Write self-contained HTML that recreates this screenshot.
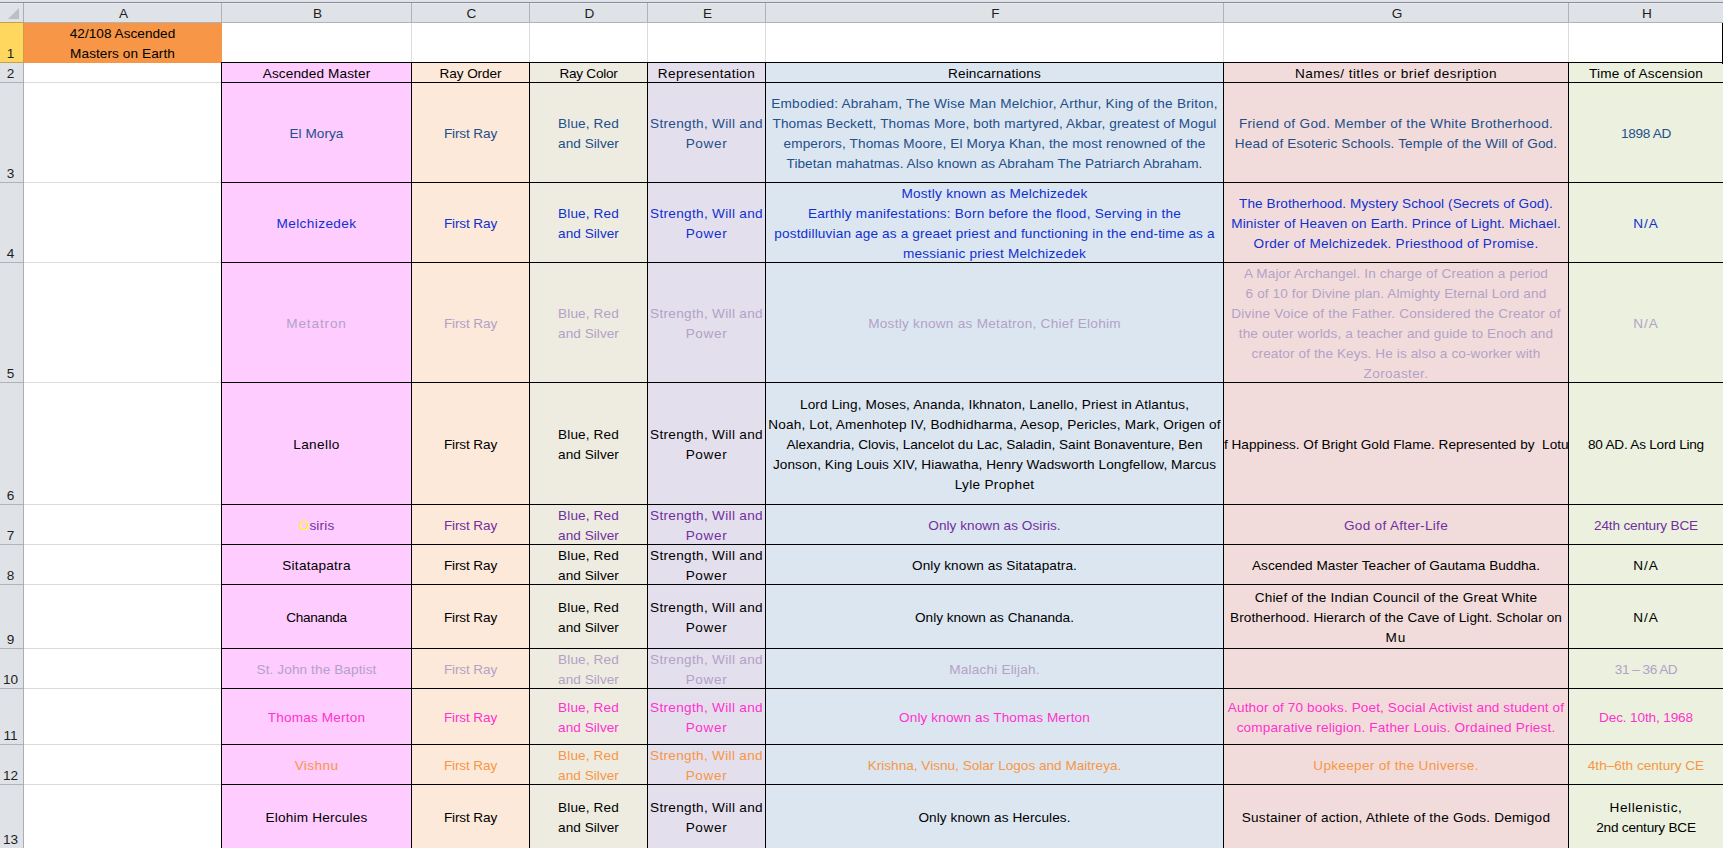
<!DOCTYPE html><html><head><meta charset="utf-8"><style>
*{margin:0;padding:0}
html,body{width:1723px;height:848px;overflow:hidden;background:#fff}
body{position:relative;font-family:"Liberation Sans",sans-serif;font-size:13.6px}
body>div{position:absolute}
.cl{position:absolute;overflow:hidden}
.t{position:absolute;left:0;width:100%;text-align:center;line-height:20px;white-space:nowrap;}
.ch{position:absolute;top:4px;height:19px;line-height:19px;text-align:center;color:#1E1E1E;font-size:13.6px}
.rn{position:absolute;left:-1px;width:23px;height:20px;line-height:20px;text-align:center;color:#1E1E1E;font-size:13.6px}
</style></head><body>
<div style="left:0px;top:0px;width:1723px;height:2px;background:#DEE2EE;"></div>
<div style="left:0px;top:2px;width:1723px;height:1px;background:#8D8D8D;"></div>
<div style="left:0px;top:3px;width:1723px;height:19px;background:#DFE3E8;"></div>
<div style="left:0px;top:3px;width:1723px;height:1px;background:#E8EAEE;"></div>
<div style="left:0px;top:22px;width:1723px;height:1px;background:#AEB3BA;"></div>
<div style="left:0px;top:23px;width:23px;height:825px;background:#DFE3E8;"></div>
<div style="left:23px;top:3px;width:1px;height:845px;background:#A9AEB6;"></div>
<div style="left:221px;top:3px;width:1px;height:20px;background:#AEB3BA;"></div>
<div style="left:411px;top:3px;width:1px;height:20px;background:#AEB3BA;"></div>
<div style="left:529px;top:3px;width:1px;height:20px;background:#AEB3BA;"></div>
<div style="left:647px;top:3px;width:1px;height:20px;background:#AEB3BA;"></div>
<div style="left:765px;top:3px;width:1px;height:20px;background:#AEB3BA;"></div>
<div style="left:1223px;top:3px;width:1px;height:20px;background:#AEB3BA;"></div>
<div style="left:1568px;top:3px;width:1px;height:20px;background:#AEB3BA;"></div>
<svg style="position:absolute;left:0;top:0" width="23" height="22"><polygon points="19,8 19,19 8,19" fill="#BBBFC4"/></svg>
<div class="ch" style="left:25px;width:197px">A</div>
<div class="ch" style="left:223px;width:189px">B</div>
<div class="ch" style="left:413px;width:117px">C</div>
<div class="ch" style="left:531px;width:117px">D</div>
<div class="ch" style="left:649px;width:117px">E</div>
<div class="ch" style="left:767px;width:457px">F</div>
<div class="ch" style="left:1225px;width:344px">G</div>
<div class="ch" style="left:1570px;width:154px">H</div>
<div style="left:0px;top:22px;width:24px;height:41px;background:#C9A04A;"></div>
<div style="left:0px;top:23px;width:23px;height:39px;background:#FFD75E;"></div>
<div class="rn" style="top:44px">1</div>
<div style="left:0px;top:82px;width:23px;height:1px;background:#AEB3BA;"></div>
<div class="rn" style="top:64px">2</div>
<div style="left:0px;top:182px;width:23px;height:1px;background:#AEB3BA;"></div>
<div class="rn" style="top:164px">3</div>
<div style="left:0px;top:262px;width:23px;height:1px;background:#AEB3BA;"></div>
<div class="rn" style="top:244px">4</div>
<div style="left:0px;top:382px;width:23px;height:1px;background:#AEB3BA;"></div>
<div class="rn" style="top:364px">5</div>
<div style="left:0px;top:504px;width:23px;height:1px;background:#AEB3BA;"></div>
<div class="rn" style="top:486px">6</div>
<div style="left:0px;top:544px;width:23px;height:1px;background:#AEB3BA;"></div>
<div class="rn" style="top:526px">7</div>
<div style="left:0px;top:584px;width:23px;height:1px;background:#AEB3BA;"></div>
<div class="rn" style="top:566px">8</div>
<div style="left:0px;top:648px;width:23px;height:1px;background:#AEB3BA;"></div>
<div class="rn" style="top:630px">9</div>
<div style="left:0px;top:688px;width:23px;height:1px;background:#AEB3BA;"></div>
<div class="rn" style="top:670px">10</div>
<div style="left:0px;top:744px;width:23px;height:1px;background:#AEB3BA;"></div>
<div class="rn" style="top:726px">11</div>
<div style="left:0px;top:784px;width:23px;height:1px;background:#AEB3BA;"></div>
<div class="rn" style="top:766px">12</div>
<div style="left:0px;top:848px;width:23px;height:1px;background:#AEB3BA;"></div>
<div class="rn" style="top:830px">13</div>
<div style="left:24px;top:62px;width:1699px;height:1px;background:#DADCDD;"></div>
<div style="left:24px;top:82px;width:1699px;height:1px;background:#DADCDD;"></div>
<div style="left:24px;top:182px;width:1699px;height:1px;background:#DADCDD;"></div>
<div style="left:24px;top:262px;width:1699px;height:1px;background:#DADCDD;"></div>
<div style="left:24px;top:382px;width:1699px;height:1px;background:#DADCDD;"></div>
<div style="left:24px;top:504px;width:1699px;height:1px;background:#DADCDD;"></div>
<div style="left:24px;top:544px;width:1699px;height:1px;background:#DADCDD;"></div>
<div style="left:24px;top:584px;width:1699px;height:1px;background:#DADCDD;"></div>
<div style="left:24px;top:648px;width:1699px;height:1px;background:#DADCDD;"></div>
<div style="left:24px;top:688px;width:1699px;height:1px;background:#DADCDD;"></div>
<div style="left:24px;top:744px;width:1699px;height:1px;background:#DADCDD;"></div>
<div style="left:24px;top:784px;width:1699px;height:1px;background:#DADCDD;"></div>
<div style="left:24px;top:848px;width:1699px;height:1px;background:#DADCDD;"></div>
<div style="left:221px;top:23px;width:1px;height:825px;background:#DADCDD;"></div>
<div style="left:411px;top:23px;width:1px;height:825px;background:#DADCDD;"></div>
<div style="left:529px;top:23px;width:1px;height:825px;background:#DADCDD;"></div>
<div style="left:647px;top:23px;width:1px;height:825px;background:#DADCDD;"></div>
<div style="left:765px;top:23px;width:1px;height:825px;background:#DADCDD;"></div>
<div style="left:1223px;top:23px;width:1px;height:825px;background:#DADCDD;"></div>
<div style="left:1568px;top:23px;width:1px;height:825px;background:#DADCDD;"></div>
<div style="left:24px;top:23px;width:198px;height:40px;background:#F79646;"></div>
<div style="left:221px;top:62px;width:191px;height:21px;background:#FFCCFF;"></div>
<div style="left:411px;top:62px;width:119px;height:21px;background:#FDE9D9;"></div>
<div style="left:529px;top:62px;width:119px;height:21px;background:#EEECE1;"></div>
<div style="left:647px;top:62px;width:119px;height:21px;background:#E4DFEC;"></div>
<div style="left:765px;top:62px;width:459px;height:21px;background:#DCE6F1;"></div>
<div style="left:1223px;top:62px;width:346px;height:21px;background:#F2DCDB;"></div>
<div style="left:1568px;top:62px;width:156px;height:21px;background:#EBF1DE;"></div>
<div style="left:221px;top:82px;width:191px;height:101px;background:#FFCCFF;"></div>
<div style="left:411px;top:82px;width:119px;height:101px;background:#FDE9D9;"></div>
<div style="left:529px;top:82px;width:119px;height:101px;background:#EEECE1;"></div>
<div style="left:647px;top:82px;width:119px;height:101px;background:#E4DFEC;"></div>
<div style="left:765px;top:82px;width:459px;height:101px;background:#DCE6F1;"></div>
<div style="left:1223px;top:82px;width:346px;height:101px;background:#F2DCDB;"></div>
<div style="left:1568px;top:82px;width:156px;height:101px;background:#EBF1DE;"></div>
<div style="left:221px;top:182px;width:191px;height:81px;background:#FFCCFF;"></div>
<div style="left:411px;top:182px;width:119px;height:81px;background:#FDE9D9;"></div>
<div style="left:529px;top:182px;width:119px;height:81px;background:#EEECE1;"></div>
<div style="left:647px;top:182px;width:119px;height:81px;background:#E4DFEC;"></div>
<div style="left:765px;top:182px;width:459px;height:81px;background:#DCE6F1;"></div>
<div style="left:1223px;top:182px;width:346px;height:81px;background:#F2DCDB;"></div>
<div style="left:1568px;top:182px;width:156px;height:81px;background:#EBF1DE;"></div>
<div style="left:221px;top:262px;width:191px;height:121px;background:#FFCCFF;"></div>
<div style="left:411px;top:262px;width:119px;height:121px;background:#FDE9D9;"></div>
<div style="left:529px;top:262px;width:119px;height:121px;background:#EEECE1;"></div>
<div style="left:647px;top:262px;width:119px;height:121px;background:#E4DFEC;"></div>
<div style="left:765px;top:262px;width:459px;height:121px;background:#DCE6F1;"></div>
<div style="left:1223px;top:262px;width:346px;height:121px;background:#F2DCDB;"></div>
<div style="left:1568px;top:262px;width:156px;height:121px;background:#EBF1DE;"></div>
<div style="left:221px;top:382px;width:191px;height:123px;background:#FFCCFF;"></div>
<div style="left:411px;top:382px;width:119px;height:123px;background:#FDE9D9;"></div>
<div style="left:529px;top:382px;width:119px;height:123px;background:#EEECE1;"></div>
<div style="left:647px;top:382px;width:119px;height:123px;background:#E4DFEC;"></div>
<div style="left:765px;top:382px;width:459px;height:123px;background:#DCE6F1;"></div>
<div style="left:1223px;top:382px;width:346px;height:123px;background:#F2DCDB;"></div>
<div style="left:1568px;top:382px;width:156px;height:123px;background:#EBF1DE;"></div>
<div style="left:221px;top:504px;width:191px;height:41px;background:#FFCCFF;"></div>
<div style="left:411px;top:504px;width:119px;height:41px;background:#FDE9D9;"></div>
<div style="left:529px;top:504px;width:119px;height:41px;background:#EEECE1;"></div>
<div style="left:647px;top:504px;width:119px;height:41px;background:#E4DFEC;"></div>
<div style="left:765px;top:504px;width:459px;height:41px;background:#DCE6F1;"></div>
<div style="left:1223px;top:504px;width:346px;height:41px;background:#F2DCDB;"></div>
<div style="left:1568px;top:504px;width:156px;height:41px;background:#EBF1DE;"></div>
<div style="left:221px;top:544px;width:191px;height:41px;background:#FFCCFF;"></div>
<div style="left:411px;top:544px;width:119px;height:41px;background:#FDE9D9;"></div>
<div style="left:529px;top:544px;width:119px;height:41px;background:#EEECE1;"></div>
<div style="left:647px;top:544px;width:119px;height:41px;background:#E4DFEC;"></div>
<div style="left:765px;top:544px;width:459px;height:41px;background:#DCE6F1;"></div>
<div style="left:1223px;top:544px;width:346px;height:41px;background:#F2DCDB;"></div>
<div style="left:1568px;top:544px;width:156px;height:41px;background:#EBF1DE;"></div>
<div style="left:221px;top:584px;width:191px;height:65px;background:#FFCCFF;"></div>
<div style="left:411px;top:584px;width:119px;height:65px;background:#FDE9D9;"></div>
<div style="left:529px;top:584px;width:119px;height:65px;background:#EEECE1;"></div>
<div style="left:647px;top:584px;width:119px;height:65px;background:#E4DFEC;"></div>
<div style="left:765px;top:584px;width:459px;height:65px;background:#DCE6F1;"></div>
<div style="left:1223px;top:584px;width:346px;height:65px;background:#F2DCDB;"></div>
<div style="left:1568px;top:584px;width:156px;height:65px;background:#EBF1DE;"></div>
<div style="left:221px;top:648px;width:191px;height:41px;background:#FFCCFF;"></div>
<div style="left:411px;top:648px;width:119px;height:41px;background:#FDE9D9;"></div>
<div style="left:529px;top:648px;width:119px;height:41px;background:#EEECE1;"></div>
<div style="left:647px;top:648px;width:119px;height:41px;background:#E4DFEC;"></div>
<div style="left:765px;top:648px;width:459px;height:41px;background:#DCE6F1;"></div>
<div style="left:1223px;top:648px;width:346px;height:41px;background:#F2DCDB;"></div>
<div style="left:1568px;top:648px;width:156px;height:41px;background:#EBF1DE;"></div>
<div style="left:221px;top:688px;width:191px;height:57px;background:#FFCCFF;"></div>
<div style="left:411px;top:688px;width:119px;height:57px;background:#FDE9D9;"></div>
<div style="left:529px;top:688px;width:119px;height:57px;background:#EEECE1;"></div>
<div style="left:647px;top:688px;width:119px;height:57px;background:#E4DFEC;"></div>
<div style="left:765px;top:688px;width:459px;height:57px;background:#DCE6F1;"></div>
<div style="left:1223px;top:688px;width:346px;height:57px;background:#F2DCDB;"></div>
<div style="left:1568px;top:688px;width:156px;height:57px;background:#EBF1DE;"></div>
<div style="left:221px;top:744px;width:191px;height:41px;background:#FFCCFF;"></div>
<div style="left:411px;top:744px;width:119px;height:41px;background:#FDE9D9;"></div>
<div style="left:529px;top:744px;width:119px;height:41px;background:#EEECE1;"></div>
<div style="left:647px;top:744px;width:119px;height:41px;background:#E4DFEC;"></div>
<div style="left:765px;top:744px;width:459px;height:41px;background:#DCE6F1;"></div>
<div style="left:1223px;top:744px;width:346px;height:41px;background:#F2DCDB;"></div>
<div style="left:1568px;top:744px;width:156px;height:41px;background:#EBF1DE;"></div>
<div style="left:221px;top:784px;width:191px;height:65px;background:#FFCCFF;"></div>
<div style="left:411px;top:784px;width:119px;height:65px;background:#FDE9D9;"></div>
<div style="left:529px;top:784px;width:119px;height:65px;background:#EEECE1;"></div>
<div style="left:647px;top:784px;width:119px;height:65px;background:#E4DFEC;"></div>
<div style="left:765px;top:784px;width:459px;height:65px;background:#DCE6F1;"></div>
<div style="left:1223px;top:784px;width:346px;height:65px;background:#F2DCDB;"></div>
<div style="left:1568px;top:784px;width:156px;height:65px;background:#EBF1DE;"></div>
<div style="left:221px;top:62px;width:1502px;height:1px;background:#000;"></div>
<div style="left:221px;top:82px;width:1502px;height:1px;background:#000;"></div>
<div style="left:221px;top:182px;width:1502px;height:1px;background:#000;"></div>
<div style="left:221px;top:262px;width:1502px;height:1px;background:#000;"></div>
<div style="left:221px;top:382px;width:1502px;height:1px;background:#000;"></div>
<div style="left:221px;top:504px;width:1502px;height:1px;background:#000;"></div>
<div style="left:221px;top:544px;width:1502px;height:1px;background:#000;"></div>
<div style="left:221px;top:584px;width:1502px;height:1px;background:#000;"></div>
<div style="left:221px;top:648px;width:1502px;height:1px;background:#000;"></div>
<div style="left:221px;top:688px;width:1502px;height:1px;background:#000;"></div>
<div style="left:221px;top:744px;width:1502px;height:1px;background:#000;"></div>
<div style="left:221px;top:784px;width:1502px;height:1px;background:#000;"></div>
<div style="left:221px;top:848px;width:1502px;height:1px;background:#000;"></div>
<div style="left:221px;top:62px;width:1px;height:786px;background:#000;"></div>
<div style="left:411px;top:62px;width:1px;height:786px;background:#000;"></div>
<div style="left:529px;top:62px;width:1px;height:786px;background:#000;"></div>
<div style="left:647px;top:62px;width:1px;height:786px;background:#000;"></div>
<div style="left:765px;top:62px;width:1px;height:786px;background:#000;"></div>
<div style="left:1223px;top:62px;width:1px;height:786px;background:#000;"></div>
<div style="left:1568px;top:62px;width:1px;height:786px;background:#000;"></div>
<div style="left:1722px;top:23px;width:1px;height:41px;background:#000;"></div>
<div class="cl" style="left:24px;top:23px;width:197px;height:39px"><div class="t" style="top:1.29px;color:#000"><span style="letter-spacing:0.036px">42/108 Ascended</span><br><span style="letter-spacing:0.080px">Masters on Earth</span></div></div>
<div class="cl" style="left:222px;top:63px;width:189px;height:19px"><div class="t" style="top:1.29px;color:#000000"><span style="letter-spacing:0.121px">Ascended Master</span></div></div>
<div class="cl" style="left:412px;top:63px;width:117px;height:19px"><div class="t" style="top:1.29px;color:#000000"><span style="letter-spacing:-0.100px">Ray Order</span></div></div>
<div class="cl" style="left:530px;top:63px;width:117px;height:19px"><div class="t" style="top:1.29px;color:#000000"><span style="letter-spacing:-0.263px">Ray Color</span></div></div>
<div class="cl" style="left:648px;top:63px;width:117px;height:19px"><div class="t" style="top:1.29px;color:#000000"><span style="letter-spacing:0.377px">Representation</span></div></div>
<div class="cl" style="left:766px;top:63px;width:457px;height:19px"><div class="t" style="top:1.29px;color:#000000"><span style="letter-spacing:0.169px">Reincarnations</span></div></div>
<div class="cl" style="left:1224px;top:63px;width:344px;height:19px"><div class="t" style="top:1.29px;color:#000000"><span style="letter-spacing:0.450px">Names/ titles or brief desription</span></div></div>
<div class="cl" style="left:1569px;top:63px;width:154px;height:19px"><div class="t" style="top:1.29px;color:#000000"><span style="letter-spacing:0.206px">Time of Ascension</span></div></div>
<div class="cl" style="left:222px;top:83px;width:189px;height:99px"><div class="t" style="top:41.29px;color:#234F8A"><span style="letter-spacing:0.043px">El Morya</span></div></div>
<div class="cl" style="left:412px;top:83px;width:117px;height:99px"><div class="t" style="top:41.29px;color:#234F8A"><span style="letter-spacing:-0.138px">First Ray</span></div></div>
<div class="cl" style="left:530px;top:83px;width:117px;height:99px"><div class="t" style="top:31.29px;color:#234F8A"><span style="letter-spacing:0.125px">Blue, Red</span><br><span style="letter-spacing:0.044px">and Silver</span></div></div>
<div class="cl" style="left:648px;top:83px;width:117px;height:99px"><div class="t" style="top:31.29px;color:#234F8A"><span style="letter-spacing:0.312px">Strength, Will and</span><br><span style="letter-spacing:0.625px">Power</span></div></div>
<div class="cl" style="left:766px;top:83px;width:457px;height:99px"><div class="t" style="top:11.29px;color:#234F8A"><span style="letter-spacing:0.221px">Embodied: Abraham, The Wise Man Melchior, Arthur, King of the Briton,</span><br><span style="letter-spacing:0.134px">Thomas Beckett, Thomas More, both martyred, Akbar, greatest of Mogul</span><br><span style="letter-spacing:0.129px">emperors, Thomas Moore, El Morya Khan, the most renowned of the</span><br><span style="letter-spacing:0.066px">Tibetan mahatmas. Also known as Abraham The Patriarch Abraham.</span></div></div>
<div class="cl" style="left:1224px;top:83px;width:344px;height:99px"><div class="t" style="top:31.29px;color:#234F8A"><span style="letter-spacing:0.320px">Friend of God. Member of the White Brotherhood.</span><br><span style="letter-spacing:0.131px">Head of Esoteric Schools. Temple of the Will of God.</span></div></div>
<div class="cl" style="left:1569px;top:83px;width:154px;height:99px"><div class="t" style="top:41.29px;color:#234F8A"><span style="letter-spacing:-0.317px">1898 AD</span></div></div>
<div class="cl" style="left:222px;top:183px;width:189px;height:79px"><div class="t" style="top:31.29px;color:#1030D0"><span style="letter-spacing:0.410px">Melchizedek</span></div></div>
<div class="cl" style="left:412px;top:183px;width:117px;height:79px"><div class="t" style="top:31.29px;color:#1030D0"><span style="letter-spacing:-0.138px">First Ray</span></div></div>
<div class="cl" style="left:530px;top:183px;width:117px;height:79px"><div class="t" style="top:21.29px;color:#1030D0"><span style="letter-spacing:0.125px">Blue, Red</span><br><span style="letter-spacing:0.044px">and Silver</span></div></div>
<div class="cl" style="left:648px;top:183px;width:117px;height:79px"><div class="t" style="top:21.29px;color:#1030D0"><span style="letter-spacing:0.312px">Strength, Will and</span><br><span style="letter-spacing:0.625px">Power</span></div></div>
<div class="cl" style="left:766px;top:183px;width:457px;height:79px"><div class="t" style="top:1.29px;color:#1030D0"><span style="letter-spacing:0.231px">Mostly known as Melchizedek</span><br><span style="letter-spacing:0.233px">Earthly manifestations: Born before the flood, Serving in the</span><br><span style="letter-spacing:0.153px">postdilluvian age as a greaet priest and functioning in the end-time as a</span><br><span style="letter-spacing:0.222px">messianic priest Melchizedek</span></div></div>
<div class="cl" style="left:1224px;top:183px;width:344px;height:79px"><div class="t" style="top:11.29px;color:#1030D0"><span style="letter-spacing:0.085px">The Brotherhood. Mystery School (Secrets of God).</span><br><span style="letter-spacing:0.158px">Minister of Heaven on Earth. Prince of Light. Michael.</span><br><span style="letter-spacing:0.240px">Order of Melchizedek. Priesthood of Promise.</span></div></div>
<div class="cl" style="left:1569px;top:183px;width:154px;height:79px"><div class="t" style="top:31.29px;color:#1030D0"><span style="letter-spacing:1.000px">N/A</span></div></div>
<div class="cl" style="left:222px;top:263px;width:189px;height:119px"><div class="t" style="top:51.29px;color:#B3A2C7"><span style="letter-spacing:0.857px">Metatron</span></div></div>
<div class="cl" style="left:412px;top:263px;width:117px;height:119px"><div class="t" style="top:51.29px;color:#B3A2C7"><span style="letter-spacing:-0.138px">First Ray</span></div></div>
<div class="cl" style="left:530px;top:263px;width:117px;height:119px"><div class="t" style="top:41.29px;color:#B3A2C7"><span style="letter-spacing:0.125px">Blue, Red</span><br><span style="letter-spacing:0.044px">and Silver</span></div></div>
<div class="cl" style="left:648px;top:263px;width:117px;height:119px"><div class="t" style="top:41.29px;color:#B3A2C7"><span style="letter-spacing:0.312px">Strength, Will and</span><br><span style="letter-spacing:0.625px">Power</span></div></div>
<div class="cl" style="left:766px;top:263px;width:457px;height:119px"><div class="t" style="top:51.29px;color:#B3A2C7"><span style="letter-spacing:0.268px">Mostly known as Metatron, Chief Elohim</span></div></div>
<div class="cl" style="left:1224px;top:263px;width:344px;height:119px"><div class="t" style="top:1.29px;color:#B3A2C7"><span style="letter-spacing:0.129px">A Major Archangel. In charge of Creation a period</span><br><span style="letter-spacing:0.106px">6 of 10 for Divine plan. Almighty Eternal Lord and</span><br><span style="letter-spacing:0.198px">Divine Voice of the Father. Considered the Creator of</span><br><span style="letter-spacing:0.122px">the outer worlds, a teacher and guide to Enoch and</span><br><span style="letter-spacing:0.098px">creator of the Keys. He is also a co-worker with</span><br><span style="letter-spacing:0.356px">Zoroaster.</span></div></div>
<div class="cl" style="left:1569px;top:263px;width:154px;height:119px"><div class="t" style="top:51.29px;color:#B3A2C7"><span style="letter-spacing:1.000px">N/A</span></div></div>
<div class="cl" style="left:222px;top:383px;width:189px;height:121px"><div class="t" style="top:52.29px;color:#000000"><span style="letter-spacing:0.383px">Lanello</span></div></div>
<div class="cl" style="left:412px;top:383px;width:117px;height:121px"><div class="t" style="top:52.29px;color:#000000"><span style="letter-spacing:-0.138px">First Ray</span></div></div>
<div class="cl" style="left:530px;top:383px;width:117px;height:121px"><div class="t" style="top:42.29px;color:#000000"><span style="letter-spacing:0.125px">Blue, Red</span><br><span style="letter-spacing:0.044px">and Silver</span></div></div>
<div class="cl" style="left:648px;top:383px;width:117px;height:121px"><div class="t" style="top:42.29px;color:#000000"><span style="letter-spacing:0.312px">Strength, Will and</span><br><span style="letter-spacing:0.625px">Power</span></div></div>
<div class="cl" style="left:766px;top:383px;width:457px;height:121px"><div class="t" style="top:12.29px;color:#000000"><span style="letter-spacing:0.116px">Lord Ling, Moses, Ananda, Ikhnaton, Lanello, Priest in Atlantus,</span><br><span style="letter-spacing:0.154px">Noah, Lot, Amenhotep IV, Bodhidharma, Aesop, Pericles, Mark, Origen of</span><br><span style="letter-spacing:-0.006px">Alexandria, Clovis, Lancelot du Lac, Saladin, Saint Bonaventure, Ben</span><br><span style="letter-spacing:0.064px">Jonson, King Louis XIV, Hiawatha, Henry Wadsworth Longfellow, Marcus</span><br><span style="letter-spacing:0.327px">Lyle Prophet</span></div></div>
<div class="cl" style="left:1224px;top:383px;width:344px;height:121px"><div class="t" style="top:52.29px;left:0;width:auto;text-align:left;color:#000000"><span style="letter-spacing:0.000px">f Happiness. Of Bright Gold Flame. Represented by  Lotu</span></div></div>
<div class="cl" style="left:1569px;top:383px;width:154px;height:121px"><div class="t" style="top:52.29px;color:#000000"><span style="letter-spacing:-0.222px">80 AD. As Lord Ling</span></div></div>
<div class="cl" style="left:222px;top:505px;width:189px;height:39px"><div class="t" style="top:11.29px;color:#7030A0"><span style="letter-spacing:0.160px"><span style="color:#FFFF00">O</span>siris</span></div></div>
<div class="cl" style="left:412px;top:505px;width:117px;height:39px"><div class="t" style="top:11.29px;color:#7030A0"><span style="letter-spacing:-0.138px">First Ray</span></div></div>
<div class="cl" style="left:530px;top:505px;width:117px;height:39px"><div class="t" style="top:1.29px;color:#7030A0"><span style="letter-spacing:0.125px">Blue, Red</span><br><span style="letter-spacing:0.044px">and Silver</span></div></div>
<div class="cl" style="left:648px;top:505px;width:117px;height:39px"><div class="t" style="top:1.29px;color:#7030A0"><span style="letter-spacing:0.312px">Strength, Will and</span><br><span style="letter-spacing:0.625px">Power</span></div></div>
<div class="cl" style="left:766px;top:505px;width:457px;height:39px"><div class="t" style="top:11.29px;color:#7030A0"><span style="letter-spacing:0.045px">Only known as Osiris.</span></div></div>
<div class="cl" style="left:1224px;top:505px;width:344px;height:39px"><div class="t" style="top:11.29px;color:#7030A0"><span style="letter-spacing:0.300px">God of After-Life</span></div></div>
<div class="cl" style="left:1569px;top:505px;width:154px;height:39px"><div class="t" style="top:11.29px;color:#7030A0"><span style="letter-spacing:-0.167px">24th century BCE</span></div></div>
<div class="cl" style="left:222px;top:545px;width:189px;height:39px"><div class="t" style="top:11.29px;color:#000000"><span style="letter-spacing:0.240px">Sitatapatra</span></div></div>
<div class="cl" style="left:412px;top:545px;width:117px;height:39px"><div class="t" style="top:11.29px;color:#000000"><span style="letter-spacing:-0.138px">First Ray</span></div></div>
<div class="cl" style="left:530px;top:545px;width:117px;height:39px"><div class="t" style="top:1.29px;color:#000000"><span style="letter-spacing:0.125px">Blue, Red</span><br><span style="letter-spacing:0.044px">and Silver</span></div></div>
<div class="cl" style="left:648px;top:545px;width:117px;height:39px"><div class="t" style="top:1.29px;color:#000000"><span style="letter-spacing:0.312px">Strength, Will and</span><br><span style="letter-spacing:0.625px">Power</span></div></div>
<div class="cl" style="left:766px;top:545px;width:457px;height:39px"><div class="t" style="top:11.29px;color:#000000"><span style="letter-spacing:0.096px">Only known as Sitatapatra.</span></div></div>
<div class="cl" style="left:1224px;top:545px;width:344px;height:39px"><div class="t" style="top:11.29px;color:#000000"><span style="letter-spacing:0.024px">Ascended Master Teacher of Gautama Buddha.</span></div></div>
<div class="cl" style="left:1569px;top:545px;width:154px;height:39px"><div class="t" style="top:11.29px;color:#000000"><span style="letter-spacing:1.000px">N/A</span></div></div>
<div class="cl" style="left:222px;top:585px;width:189px;height:63px"><div class="t" style="top:23.29px;color:#000000"><span style="letter-spacing:-0.271px">Chananda</span></div></div>
<div class="cl" style="left:412px;top:585px;width:117px;height:63px"><div class="t" style="top:23.29px;color:#000000"><span style="letter-spacing:-0.138px">First Ray</span></div></div>
<div class="cl" style="left:530px;top:585px;width:117px;height:63px"><div class="t" style="top:13.29px;color:#000000"><span style="letter-spacing:0.125px">Blue, Red</span><br><span style="letter-spacing:0.044px">and Silver</span></div></div>
<div class="cl" style="left:648px;top:585px;width:117px;height:63px"><div class="t" style="top:13.29px;color:#000000"><span style="letter-spacing:0.312px">Strength, Will and</span><br><span style="letter-spacing:0.625px">Power</span></div></div>
<div class="cl" style="left:766px;top:585px;width:457px;height:63px"><div class="t" style="top:23.29px;color:#000000"><span style="letter-spacing:-0.027px">Only known as Chananda.</span></div></div>
<div class="cl" style="left:1224px;top:585px;width:344px;height:63px"><div class="t" style="top:3.29px;color:#000000"><span style="letter-spacing:0.200px">Chief of the Indian Council of the Great White</span><br><span style="letter-spacing:0.072px">Brotherhood. Hierarch of the Cave of Light. Scholar on</span><br><span style="letter-spacing:1.000px">Mu</span></div></div>
<div class="cl" style="left:1569px;top:585px;width:154px;height:63px"><div class="t" style="top:23.29px;color:#000000"><span style="letter-spacing:1.000px">N/A</span></div></div>
<div class="cl" style="left:222px;top:649px;width:189px;height:39px"><div class="t" style="top:11.29px;color:#B3A2C7"><span style="letter-spacing:0.100px">St. John the Baptist</span></div></div>
<div class="cl" style="left:412px;top:649px;width:117px;height:39px"><div class="t" style="top:11.29px;color:#B3A2C7"><span style="letter-spacing:-0.138px">First Ray</span></div></div>
<div class="cl" style="left:530px;top:649px;width:117px;height:39px"><div class="t" style="top:1.29px;color:#B3A2C7"><span style="letter-spacing:0.125px">Blue, Red</span><br><span style="letter-spacing:0.044px">and Silver</span></div></div>
<div class="cl" style="left:648px;top:649px;width:117px;height:39px"><div class="t" style="top:1.29px;color:#B3A2C7"><span style="letter-spacing:0.312px">Strength, Will and</span><br><span style="letter-spacing:0.625px">Power</span></div></div>
<div class="cl" style="left:766px;top:649px;width:457px;height:39px"><div class="t" style="top:11.29px;color:#B3A2C7"><span style="letter-spacing:0.186px">Malachi Elijah.</span></div></div>
<div class="cl" style="left:1569px;top:649px;width:154px;height:39px"><div class="t" style="top:11.29px;color:#B3A2C7"><span style="letter-spacing:-0.500px">31 – 36 AD</span></div></div>
<div class="cl" style="left:222px;top:689px;width:189px;height:55px"><div class="t" style="top:19.29px;color:#FF33CC"><span style="letter-spacing:0.167px">Thomas Merton</span></div></div>
<div class="cl" style="left:412px;top:689px;width:117px;height:55px"><div class="t" style="top:19.29px;color:#FF33CC"><span style="letter-spacing:-0.138px">First Ray</span></div></div>
<div class="cl" style="left:530px;top:689px;width:117px;height:55px"><div class="t" style="top:9.29px;color:#FF33CC"><span style="letter-spacing:0.125px">Blue, Red</span><br><span style="letter-spacing:0.044px">and Silver</span></div></div>
<div class="cl" style="left:648px;top:689px;width:117px;height:55px"><div class="t" style="top:9.29px;color:#FF33CC"><span style="letter-spacing:0.312px">Strength, Will and</span><br><span style="letter-spacing:0.625px">Power</span></div></div>
<div class="cl" style="left:766px;top:689px;width:457px;height:55px"><div class="t" style="top:19.29px;color:#FF33CC"><span style="letter-spacing:0.108px">Only known as Thomas Merton</span></div></div>
<div class="cl" style="left:1224px;top:689px;width:344px;height:55px"><div class="t" style="top:9.29px;color:#FF33CC"><span style="letter-spacing:0.109px">Author of 70 books. Poet, Social Activist and student of</span><br><span style="letter-spacing:0.157px">comparative religion. Father Louis. Ordained Priest.</span></div></div>
<div class="cl" style="left:1569px;top:689px;width:154px;height:55px"><div class="t" style="top:19.29px;color:#FF33CC"><span style="letter-spacing:-0.143px">Dec. 10th, 1968</span></div></div>
<div class="cl" style="left:222px;top:745px;width:189px;height:39px"><div class="t" style="top:11.29px;color:#F79646"><span style="letter-spacing:0.400px">Vishnu</span></div></div>
<div class="cl" style="left:412px;top:745px;width:117px;height:39px"><div class="t" style="top:11.29px;color:#F79646"><span style="letter-spacing:-0.138px">First Ray</span></div></div>
<div class="cl" style="left:530px;top:745px;width:117px;height:39px"><div class="t" style="top:1.29px;color:#F79646"><span style="letter-spacing:0.125px">Blue, Red</span><br><span style="letter-spacing:0.044px">and Silver</span></div></div>
<div class="cl" style="left:648px;top:745px;width:117px;height:39px"><div class="t" style="top:1.29px;color:#F79646"><span style="letter-spacing:0.312px">Strength, Will and</span><br><span style="letter-spacing:0.625px">Power</span></div></div>
<div class="cl" style="left:766px;top:745px;width:457px;height:39px"><div class="t" style="top:11.29px;color:#F79646"><span style="letter-spacing:-0.002px">Krishna, Visnu, Solar Logos and Maitreya.</span></div></div>
<div class="cl" style="left:1224px;top:745px;width:344px;height:39px"><div class="t" style="top:11.29px;color:#F79646"><span style="letter-spacing:0.300px">Upkeeper of the Universe.</span></div></div>
<div class="cl" style="left:1569px;top:745px;width:154px;height:39px"><div class="t" style="top:11.29px;color:#F79646"><span style="letter-spacing:0.000px">4th–6th century CE</span></div></div>
<div class="cl" style="left:222px;top:785px;width:189px;height:63px"><div class="t" style="top:23.29px;color:#000000"><span style="letter-spacing:0.200px">Elohim Hercules</span></div></div>
<div class="cl" style="left:412px;top:785px;width:117px;height:63px"><div class="t" style="top:23.29px;color:#000000"><span style="letter-spacing:-0.138px">First Ray</span></div></div>
<div class="cl" style="left:530px;top:785px;width:117px;height:63px"><div class="t" style="top:13.29px;color:#000000"><span style="letter-spacing:0.125px">Blue, Red</span><br><span style="letter-spacing:0.044px">and Silver</span></div></div>
<div class="cl" style="left:648px;top:785px;width:117px;height:63px"><div class="t" style="top:13.29px;color:#000000"><span style="letter-spacing:0.312px">Strength, Will and</span><br><span style="letter-spacing:0.625px">Power</span></div></div>
<div class="cl" style="left:766px;top:785px;width:457px;height:63px"><div class="t" style="top:23.29px;color:#000000"><span style="letter-spacing:0.077px">Only known as Hercules.</span></div></div>
<div class="cl" style="left:1224px;top:785px;width:344px;height:63px"><div class="t" style="top:23.29px;color:#000000"><span style="letter-spacing:0.217px">Sustainer of action, Athlete of the Gods. Demigod</span></div></div>
<div class="cl" style="left:1569px;top:785px;width:154px;height:63px"><div class="t" style="top:13.29px;color:#000000"><span style="letter-spacing:0.609px">Hellenistic,</span><br><span style="letter-spacing:-0.214px">2nd century BCE</span></div></div>
</body></html>
